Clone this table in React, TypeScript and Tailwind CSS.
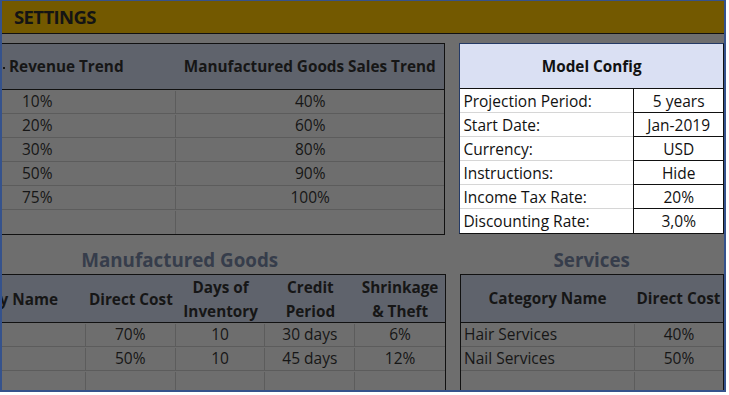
import React from "react";

const font = { fontFamily: "'Open Sans', Lato, Arial, sans-serif" };

function App() {
  const upperRows = [
    ["10%", "40%"],
    ["20%", "60%"],
    ["30%", "80%"],
    ["50%", "90%"],
    ["75%", "100%"],
    ["", ""],
  ];
  const config = [
    ["Projection Period:", "5 years"],
    ["Start Date:", "Jan-2019"],
    ["Currency:", "USD"],
    ["Instructions:", "Hide"],
    ["Income Tax Rate:", "20%"],
    ["Discounting Rate:", "3,0%"],
  ];
  const goods = [
    ["", "70%", "10", "30 days", "6%"],
    ["", "50%", "10", "45 days", "12%"],
    ["", "", "", "", ""],
  ];
  const services = [
    ["Hair Services", "40%"],
    ["Nail Services", "50%"],
    ["", ""],
  ];
  const gw = ["w-[84px]", "w-[90px]", "w-[90px]", "w-[90px]", "w-[90px]"];

  return (
    <div className="w-[729px] h-[395px] bg-white overflow-hidden" style={font}>
      <div className="w-[726px] h-[392px] border-l-2 border-t border-r-2 border-b-2 border-[#35528c] bg-[#6e6e6e] overflow-hidden flex flex-col">
        {/* Title bar */}
        <div className="h-[33px] bg-[#735900] border-b border-[#111] flex items-center pl-[12px] shrink-0">
          <span className="text-[18.5px] font-bold text-[#141414] tracking-[-0.6px]">SETTINGS</span>
        </div>

        {/* Upper section */}
        <div className="flex items-start mt-[9px] shrink-0">
          <div className="w-[444px] border-t border-b border-r border-[#111]">
            <div className="h-[46px] bg-[#5f636c] border-b border-[#111] flex items-center text-[15.3px] font-bold text-[#161616]">
              <div className="w-[173px] flex items-center whitespace-nowrap">
                <span className="w-[2px] h-[2px] bg-[#161616] ml-[1px] mr-[4px] mt-[3px]"></span>
                <span>Revenue Trend</span>
              </div>
              <div className="flex-1 text-center whitespace-nowrap">Manufactured Goods Sales Trend</div>
            </div>
            {upperRows.map((r, i) => (
              <div key={i} className={`h-[24px] flex text-[15.5px] text-[#161616] pt-[1px] ${i < upperRows.length - 1 ? "border-b border-[#5c5c5c]" : ""}`}>
                <div className="w-[174px] border-r border-[#5c5c5c] pl-[20px] flex items-center">{r[0]}</div>
                <div className="flex-1 flex items-center justify-center">{r[1]}</div>
              </div>
            ))}
          </div>

          <div className="w-[265px] ml-[14px] border-l border-t border-[#243a66] border-r-[#111] border-r border-b border-b-[#111]">
            <div className="h-[45px] bg-[#dae0f3] border-b border-[#111] flex items-center justify-center text-[15.3px] font-bold text-[#111]">
              Model Config
            </div>
            {config.map((r, i) => (
              <div key={i} className="h-[24px] flex text-[15.5px] text-[#111] bg-white">
                <div className={`w-[173px] pl-[3px] pt-[2px] flex items-center whitespace-nowrap ${i < config.length - 1 ? "border-b border-[#d6d6d6]" : ""}`}>{r[0]}</div>
                <div className={`flex-1 border-l border-[#111] pt-[2px] flex items-center justify-center ${i < config.length - 1 ? "border-b border-b-[#111]" : ""}`}>{r[1]}</div>
              </div>
            ))}
          </div>
        </div>

        {/* Titles */}
        <div className="flex h-[39px] items-center shrink-0">
          <div className="w-[356px] text-center text-[18.8px] font-bold text-[#363d4b] pt-[11px] whitespace-nowrap">Manufactured Goods</div>
          <div className="w-[265px] ml-[102px] text-center text-[18.8px] font-bold text-[#363d4b] pt-[11px]">Services</div>
        </div>

        {/* Lower section */}
        <div className="flex items-start shrink-0">
          <div className="w-[444px] border-t border-r border-[#111]">
            <div className="h-[48px] bg-[#5f636c] border-b border-[#111] flex items-center text-[15.3px] font-bold text-[#161616] leading-[24px]">
              <div className={`${gw[0]} flex justify-end pr-[28px] whitespace-nowrap`}>y Name</div>
              <div className={`${gw[1]} text-center whitespace-nowrap`}>Direct Cost</div>
              <div className={`${gw[2]} text-center`}>Days of<br />Inventory</div>
              <div className={`${gw[3]} text-center`}>Credit<br />Period</div>
              <div className={`${gw[4]} text-center`}>Shrinkage<br />&amp; Theft</div>
            </div>
            {goods.map((r, i) => (
              <div key={i} className="h-[24px] flex text-[15.5px] text-[#161616] pt-[1px] border-b border-[#5c5c5c]">
                {r.map((c, j) => (
                  <div key={j} className={`${gw[j]} ${j < 4 ? "border-r border-[#5c5c5c]" : ""} flex items-center justify-center`}>{c}</div>
                ))}
              </div>
            ))}
          </div>

          <div className="w-[265px] ml-[14px] border-t border-l border-r border-[#111]">
            <div className="h-[48px] bg-[#5f636c] border-b border-[#111] flex items-center text-[15.3px] font-bold text-[#161616]">
              <div className="w-[173px] text-center">Category Name</div>
              <div className="flex-1 text-center whitespace-nowrap">Direct Cost</div>
            </div>
            {services.map((r, i) => (
              <div key={i} className="h-[24px] flex text-[15.5px] text-[#161616] pt-[1px] border-b border-[#5c5c5c]">
                <div className="w-[174px] border-r border-[#5c5c5c] pl-[3px] flex items-center">{r[0]}</div>
                <div className="flex-1 flex items-center justify-center">{r[1]}</div>
              </div>
            ))}
          </div>
        </div>
      </div>
    </div>
  );
}

export default App;
